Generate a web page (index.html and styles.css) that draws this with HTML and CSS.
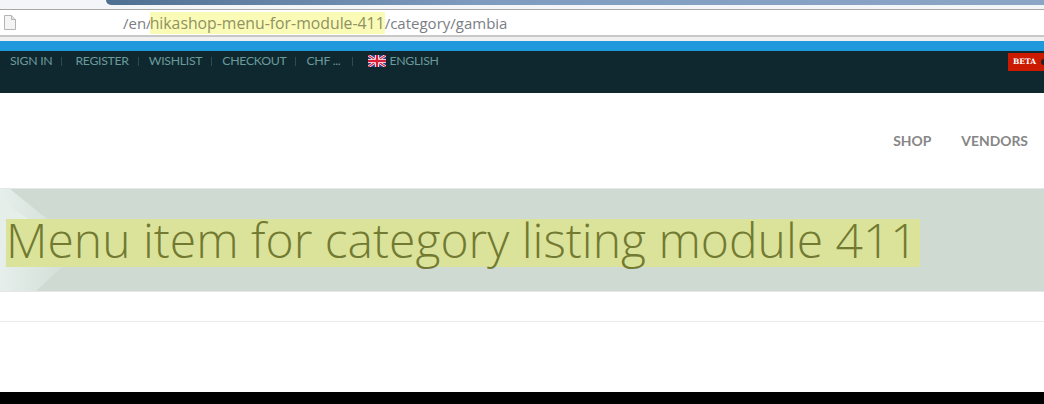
FILE: index.html
```html
<!DOCTYPE html>
<html lang="en">
<head>
    <meta charset="UTF-8">
    <title>Menu item for category listing module 411</title>
    <link rel="stylesheet" href="styles.css">
</head>
<body>
    <!-- Browser chrome -->
    <div class="tab-strip">
        <div class="tab-edge"></div>
    </div>
    <div class="address-bar">
        <svg class="page-icon" width="14" height="17" viewBox="0 0 14 17">
            <path d="M1.5 1.5h7l4 4v10h-11z" fill="#f4f4f4" stroke="#b4b4b4"/>
            <path d="M8.5 1.5v4h4" fill="#e4e4e4" stroke="#b4b4b4"/>
        </svg>
        <div class="url">/en/<mark class="url-hit">hikashop-menu-for-module-411</mark>/category/gambia</div>
    </div>
    <div class="address-shadow"></div>

    <!-- Top bar -->
    <div class="accent-bar"></div>
    <div class="top-bar">
        <ul class="top-menu">
            <li class="sign-in">SIGN IN</li>
            <li>REGISTER</li>
            <li>WISHLIST</li>
            <li>CHECKOUT</li>
            <li class="currency">CHF ...</li>
            <li class="language">
                <svg class="flag" width="18" height="12" viewBox="0 0 60 40">
                    <rect width="60" height="40" fill="#2b3f86"/>
                    <path d="M0 0L60 40M60 0L0 40" stroke="#fff" stroke-width="9"/>
                    <path d="M0 0L60 40M60 0L0 40" stroke="#d8203c" stroke-width="4"/>
                    <path d="M30 0V40M0 20H60" stroke="#fff" stroke-width="14"/>
                    <path d="M30 0V40M0 20H60" stroke="#d8203c" stroke-width="8"/>
                </svg>
                ENGLISH
            </li>
        </ul>
        <div class="beta"><span>BETA</span><i class="beta-dot"></i></div>
    </div>

    <!-- Main nav -->
    <div class="main-nav">
        <a class="nav-link">SHOP</a>
        <a class="nav-link">VENDORS</a>
    </div>

    <!-- Page title -->
    <div class="banner">
        <svg class="banner-art" width="70" height="102" viewBox="0 0 70 102">
            <defs>
                <linearGradient id="fade" x1="0" x2="1" y1="0" y2="0">
                    <stop offset="0" stop-color="#e6efeb"/>
                    <stop offset="1" stop-color="#d4dfd9"/>
                </linearGradient>
            </defs>
            <path d="M0 0H10L52 34L62 78L36 102H0z" fill="url(#fade)"/>
            <path d="M0 10L34 34L0 60z" fill="#e6eeea"/>
        </svg>
        <h1 class="page-title"><span class="title-hit">Menu item for category listing module 411</span></h1>
    </div>
    <div class="spacer"></div>
    <div class="footer-line"></div>
    <div class="black-strip"></div>
</body>
</html>
```

FILE: styles.css
```css
* {
    margin: 0;
    padding: 0;
    box-sizing: border-box;
}

html, body {
    height: 404px;
    overflow: hidden;
}

body {
    background-color: white;
    font-family: 'Lato', sans-serif;
    display: flex;
    flex-direction: column;
}

/* Browser chrome */
.tab-strip {
    height: 10px;
    background-color: #f3f5f9;
    border-bottom: 1px solid #a8a8a8;
    padding-left: 106px;
}

.tab-edge {
    height: 5px;
    background: linear-gradient(to right, #4f6f92, #7f9cc0 40%, #8ba5c6);
    border-radius: 0 0 0 5px;
}

.address-bar {
    height: 25px;
    background-color: white;
    display: flex;
    align-items: center;
    padding-left: 3px;
}

.page-icon {
    flex: none;
}

.url {
    margin-left: 106px;
    font-family: 'Open Sans', sans-serif;
    font-size: 15px;
    color: #7b7e84;
}

.url-hit {
    background-color: #fbfbb8;
    color: #8f9260;
    font-size: 15.8px;
    margin-left: -2px;
}

.address-shadow {
    height: 6px;
    background-color: #f0f0f0;
    border-top: 2px solid #c8c8c8;
}

/* Top bar */
.accent-bar {
    height: 10px;
    background-color: #2098dc;
}

.top-bar {
    height: 42px;
    background-color: #0f2830;
    display: flex;
    justify-content: space-between;
    align-items: flex-start;
}

.top-menu {
    list-style: none;
    display: flex;
    padding: 2px 0 0 10px;
    font-size: 12.3px;
    letter-spacing: -0.3px;
    line-height: 16px;
    color: #6b9a9a;
}

.top-menu li {
    padding-right: 10px;
    margin-right: 10px;
    position: relative;
}

.top-menu li::after {
    content: '';
    position: absolute;
    right: 0;
    top: 4px;
    height: 9px;
    width: 1px;
    background-color: #2c4a50;
}

.top-menu .sign-in {
    margin-right: 13px;
}

.top-menu .currency {
    padding-right: 13px;
    margin-right: 15px;
}

.top-menu .language {
    display: flex;
    align-items: center;
    gap: 3px;
}

.top-menu .language::after {
    display: none;
}

.flag {
    flex: none;
}

.beta {
    margin-top: 2px;
    width: 36px;
    height: 18px;
    background-color: #cc1a00;
    color: white;
    font-family: 'DejaVu Serif', serif;
    font-size: 7.5px;
    font-weight: bold;
    line-height: 18px;
    padding-left: 5px;
    position: relative;
}

.beta-dot {
    position: absolute;
    right: 0;
    top: 6px;
    width: 3px;
    height: 6px;
    background-color: #222;
    border-radius: 3px 0 0 3px;
}

/* Main nav */
.main-nav {
    height: 96px;
    display: flex;
    justify-content: flex-end;
    gap: 30px;
    padding: 39px 16px 0 0;
    border-bottom: 1px solid #e4e8e6;
}

.nav-link {
    font-size: 13.9px;
    line-height: 17px;
    font-weight: bold;
    color: #868686;
}

/* Page title */
.banner {
    height: 103px;
    background-color: #cfdad3;
    border-bottom: 1px solid #e6e6e6;
    padding: 30px 0 0 6px;
    position: relative;
}

.banner-art {
    position: absolute;
    left: 0;
    top: 0;
}

.page-title {
    font-family: 'Open Sans', sans-serif;
    font-size: 48px;
    font-weight: 300;
    line-height: 42px;
    color: #727a32;
    position: relative;
}

.title-hit {
    display: inline-block;
    background-color: #dbe39b;
    padding: 0 2px 6px 0;
    white-space: nowrap;
}

.spacer {
    height: 29px;
}

.footer-line {
    height: 1px;
    background-color: #ececec;
}

.black-strip {
    margin-top: auto;
    height: 12px;
    background-color: black;
}
```
